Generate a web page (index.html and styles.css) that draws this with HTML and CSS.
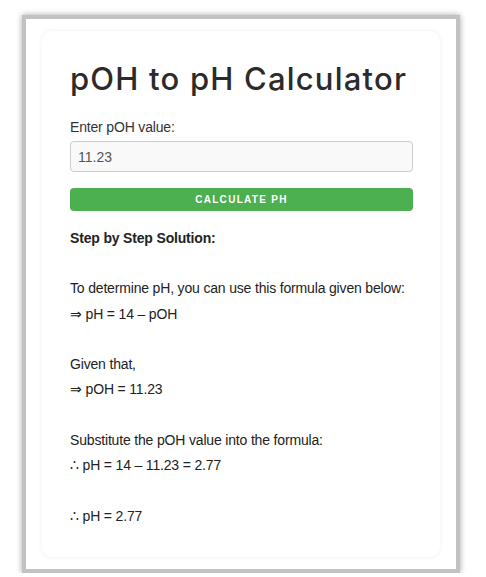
FILE: index.html
```html
<!DOCTYPE html>
<html lang="en">
<head>
<meta charset="utf-8">
<title>pOH to pH Calculator</title>
<link rel="stylesheet" href="styles.css">
</head>
<body>
<div class="frame">
  <div class="card">
    <h1 class="title">pOH to pH Calculator</h1>
    <label class="label" for="poh">Enter pOH value:</label>
    <input class="input" id="poh" type="text" value="11.23">
    <button class="btn" type="button">CALCULATE PH</button>
    <div class="result">
      <p class="heading">Step by Step Solution:</p>
      <p class="group">To determine pH, you can use this formula given below:<br>⇒ pH = 14 – pOH</p>
      <p class="group">Given that,<br>⇒ pOH = 11.23</p>
      <p class="group">Substitute the pOH value into the formula:<br>∴ pH = 14 – 11.23 = 2.77</p>
      <p class="final">∴ pH = 2.77</p>
    </div>
  </div>
</div>
</body>
</html>
```

FILE: styles.css
```css
html, body {
  margin: 0;
  padding: 0;
  background: #ffffff;
}

body {
  font-family: "Liberation Sans", Arial, sans-serif;
  color: #333333;
}

.frame {
  margin: 15px 0 0 22px;
  border: 4px solid #c2c2c2;
  padding: 12px 16px;
  box-sizing: border-box;
  width: 438px;
  background: #ffffff;
  box-shadow: 0 0 6px rgba(0, 0, 0, 0.35);
}

.card {
  background: #ffffff;
  border-radius: 10px;
  padding: 30px 27px 28px 28px;
  box-shadow: 0 0 5px rgba(0, 0, 0, 0.07);
  display: flex;
  flex-direction: column;
}

.title {
  margin: 0 0 22px 0;
  font-family: Inter, "Open Sans", sans-serif;
  font-weight: 500;
  font-size: 31px;
  letter-spacing: 1.2px;
  line-height: 36px;
  color: #2b2b2b;
  white-space: nowrap;
}

.label {
  font-size: 14px;
  line-height: 16px;
  color: #333333;
  margin-bottom: 6px;
  letter-spacing: -0.17px;
}

.input {
  box-sizing: border-box;
  height: 31px;
  width: 100%;
  margin: 0;
  border: 1px solid #cccccc;
  border-radius: 4px;
  background: #f9f9f9;
  padding: 0 7px;
  font-family: "Liberation Sans", Arial, sans-serif;
  font-size: 14px;
  color: #555555;
}

.btn {
  margin: 16px 0 0 0;
  height: 23px;
  width: 100%;
  border: none;
  border-radius: 4px;
  background: #4caf50;
  color: #ffffff;
  font-family: "Liberation Sans", Arial, sans-serif;
  font-weight: 700;
  font-size: 10px;
  letter-spacing: 1.3px;
  padding: 0;
}

.result {
  margin-top: 15px;
  font-size: 14px;
  line-height: 25.3px;
  color: #222222;
  letter-spacing: -0.17px;
  white-space: nowrap;
}

.result p {
  margin: 0;
}

.heading {
  font-weight: 700;
  margin-bottom: 25px !important;
}

.group {
  margin-bottom: 25.3px !important;
}
```
